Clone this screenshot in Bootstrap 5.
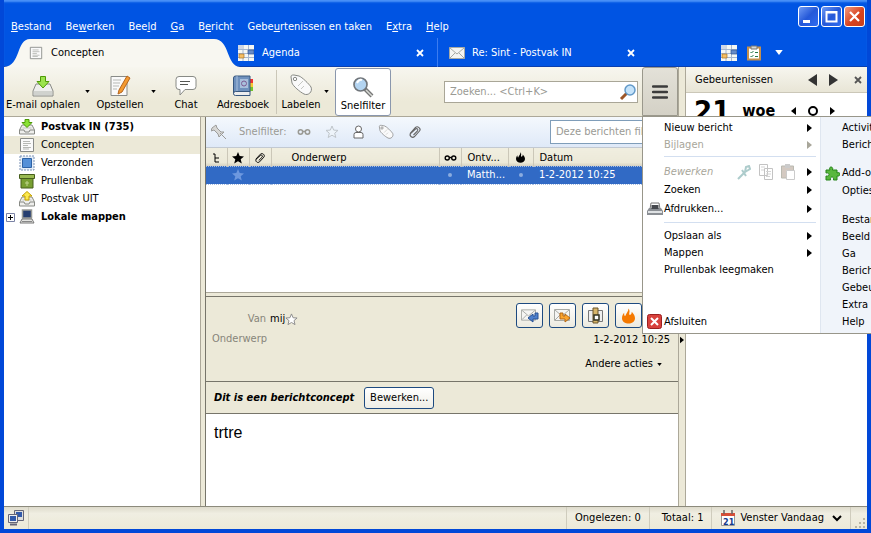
<!DOCTYPE html>
<html lang="nl">
<head>
<meta charset="utf-8">
<meta name="viewport" content="width=device-width, initial-scale=1">
<title>Concepten</title>
<link href="https://cdn.jsdelivr.net/npm/bootstrap@5.3.0/dist/css/bootstrap.min.css" rel="stylesheet">
<style>
:root{--face:#ece9d8;--frame:#0054e3;--line:#aca899}
body{font-family:"DejaVu Sans Condensed","DejaVu Sans",sans-serif;font-size:11px;line-height:16px;color:#000;background:var(--frame);overflow:hidden}
.app{border:solid #0148d8;border-width:0 4px 4px;box-shadow:inset 0 3px 2px -1px #4b93f8;background:var(--frame)}
button,input{font:inherit;color:inherit}
.plain{background:none;border:0;padding:0;border-radius:0;line-height:16px;font-size:11px;color:inherit;text-align:left;white-space:nowrap}
svg{display:block;flex:none}
/* title bar */
.topbar{height:38px;padding:6px 2px 3px 7px}
.menubar{gap:14px}
.menubar a{color:#fff;text-decoration:none}
.winbtns{gap:2px}
.winbtn{width:21px;height:21px;border:1px solid #fff;border-radius:3px;padding:0;background:linear-gradient(135deg,#6f9bf5,#2458d8 50%,#2f6cf0)}
.winbtn.quit{background:linear-gradient(135deg,#f09a80,#d9431e 55%,#c8401c)}
/* tabs */
.tabstrip{height:29px;color:#fff;box-shadow:inset 0 -1px #0a3fae}
.tab-on{width:236px;padding:1px 0 0 25px;color:#000;gap:8px}
.tab-on .shape{position:absolute;left:0;top:0;z-index:0}
.tab-on>*:not(.shape){position:relative}
.tab-off{width:210px;gap:7px;padding:0 13px 0 11px}
.tab-off.first{width:200px;gap:8px;padding-left:0;margin-left:-2px;border-right:1px solid #3c7cf0}
.tabtools{gap:10px;padding-right:84px}
/* toolbar */
.tools{height:50px;background:linear-gradient(#f7f6ef,#ece9d8 70%);border-bottom:1px solid var(--line)}
.tool{height:46px;display:flex;flex-direction:column;align-items:center;justify-content:flex-end;padding-bottom:2px;white-space:nowrap}
.w-mail{width:78px}.w-write{width:48px}.w-chat{width:48px}.w-book{width:58px}.w-tag{width:40px}
.drop{width:10px;height:46px;display:flex;align-items:center;justify-content:center}
.filter-on{width:56px;height:48px;border:1px solid #8a97ad;border-radius:3px;background:#fff;padding-bottom:1px}
.tsep{width:1px;height:44px;background:#cbc7b8}
.find{width:194px;height:22px;border:1px solid #a9a697;background:#fff}
.find input,.msgfilter input{border:0;background:none;outline:0;min-width:0;padding:0 0 0 5px}
::placeholder{color:#9a9a94!important;opacity:1}
.hamb{width:36px;height:49px;border:1px solid #9a988c;border-radius:3px 3px 0 0;background:linear-gradient(#e3e1d8,#d4d1c6)}
/* folders */
.tree{width:197px;flex:none;background:#fff;border-right:1px solid var(--line);padding-top:1px;white-space:nowrap}
.tree li{height:18px;padding-left:2px}
.tree .twist{width:13px}
.tree .sel{background:var(--face)}
.tree svg{flex:none}
.tree .fi{margin-right:6px}
.split-v{width:5px;flex:none;background:var(--face);border-right:1px solid #77756a}
.pane{min-width:0}
/* list */
.quick{height:31px;background:linear-gradient(#f4f8fd,#dfe9f8);border-bottom:1px solid #c2c9d2;color:#9a9a94;padding:0 0 0 5px}
.quick .lab{margin:0 10px 0 12px}
.quick .set{gap:14px}
.msgfilter{width:128px;height:24px;border:1px solid #7f9db9;background:#fff}
.threads{table-layout:fixed;width:100%;border-collapse:collapse}
.threads th{height:18px;font-weight:400;padding:2px 0 0;line-height:15px;background:linear-gradient(#f0eee0,#ece9d8 80%,#d6d2c2)}
.threads th+th{border-left:1px solid #cbc7b8}
.threads td{height:18px;padding:0;background:#316ac5;color:#fff;border:dotted #a7bde0;border-width:1px 0}
.threads svg{margin:auto}
.threads .tx{padding-left:6px;white-space:nowrap}
.listbox{height:176px;background:#fff;border-bottom:1px solid var(--line)}
.split-h{height:4px;background:var(--face);border-bottom:1px solid #77756a}
/* message */
.msghead{height:84px;background:var(--face);padding:2px 8px 0 6px}
.lbl{width:54px;color:#87857a;text-align:right}
.acts{gap:6px;margin-right:28px}
.actbtn{width:27px;height:25px;border:1px solid #1d4a80;border-radius:3px;background:linear-gradient(#fff,#eceadf);padding:0;display:flex;align-items:center;justify-content:center}
.draftbar{height:33px;background:var(--face);border:solid #77756a;border-width:1px 0;padding-left:8px;gap:10px}
.editbtn{height:22px;width:70px;border:1px solid #1d4a80;border-radius:3px;background:linear-gradient(#fff,#efeee6);padding:0;text-align:center}
.msgbody{background:#fff;font:16px/20px "Liberation Sans",Arial,sans-serif;padding:9px 8px}
.split-t{width:8px;flex:none;background:var(--face);border:solid var(--line);border-width:0 1px}
.split-t .above{flex:5}
.split-t .below{flex:3}
/* today */
.today{width:181px;flex:none;background:#fff}
.today-h{height:26px;padding:0 5px 0 9px;background:linear-gradient(#f7f6ef,#e8e5d6);border-bottom:1px solid #cbc7b8}
.today-d{padding:2px 8px}
.daynum{font-size:29px;line-height:32px;font-weight:700}
.dayname{font-size:16px;line-height:20px;font-weight:700}
/* application menu */
.appmenu{position:absolute;left:0;top:49px;z-index:10;width:229px;height:218px;border:1px solid #98968a;border-right:0;background:#fff}
.am-l{width:177px;flex:none;padding:2px 0 3px}
.am-r{min-width:0;overflow:hidden;background:#f0f4fa;border-left:1px solid #dfe6f0;padding:2px 0}
.mi{height:17px;display:grid;grid-template-columns:21px 1fr auto 13px;align-items:center;width:100%}
.mi.h18{height:18px}.mi.h20{height:20px}
.am-r .mi{grid-template-columns:21px 1fr}
.mi.grp{margin-top:11px}
.msep{height:1px;background:#d3dff0;margin:3px 4px 6px 21px}
.off{color:#a8a69a}
/* status */
.status{height:23px;background:linear-gradient(#dedbcc,#f0eee2 30%,#ece9d8);border-top:1px solid #8c8a7c}
.status>*{border-right:1px solid #cfccbd;height:100%;display:flex;align-items:center}
.status .tot{padding:0 8px 0 12px}
</style>
</head>
<body>
<svg width="0" height="0" class="position-absolute" aria-hidden="true">
<defs>
<symbol id="doc" viewBox="0 0 16 16"><path d="M1.5 1.5h13v13h-13z" fill="#fafafa" stroke="#898b88"/><path d="M4 4.500h7M4 6.500h8M4 8.500h5M4 10.500h8M4 12h6" stroke="#b7b9b5"/></symbol>
<symbol id="cal" viewBox="0 0 16 16"><path d="M0 0h16v16H0z" fill="#f5f7f4"/><path d="M0 4.500h16M0 8.500h16M0 12.500h16M5 0v16M10.500 0v16" stroke="#a6b7cf"/><path d="M1 9h5v4H1z" fill="#f6bf65" stroke="#a77427" stroke-width=".7"/><path d="M10 5h6v4h-6z" fill="#668bc8" stroke="#31558d" stroke-width=".7"/><path d="M0 0h4v4H0z" fill="#cfd8e8"/></symbol>
<symbol id="tray" viewBox="0 0 16 16"><path d="M3 6h10l2.500 5v4H.5v-4z" fill="#eeeeec" stroke="#888a85"/><path d="M1 11h4l1 2h4l1-2h4" fill="none" stroke="#888a85"/><path d="M3.500 9h9" stroke="#c5c7c2"/></symbol>
<symbol id="inbox" viewBox="0 0 16 16"><use href="#tray"/><path d="M6 .5h4v3h3L8 8.500 3 3.500h3z" fill="#8ae234" stroke="#4e9a06"/></symbol>
<symbol id="outbox" viewBox="0 0 16 16"><use href="#tray"/><path d="M6 9V5H3l5-4.500L13 5h-3v4z" fill="#fce94f" stroke="#c4a000"/></symbol>
<symbol id="clip" viewBox="0 0 14 14"><path d="M2 8.500L7.500 2.500C9.500.5 13.500 3.500 11.500 6L6.500 11.500C4.500 13.500 1 11 2.500 8.500L7.500 4C9 2.800 10.500 4.500 9.500 6L5.500 10" fill="none" stroke="currentColor" stroke-width="1.100"/></symbol>
<symbol id="star" viewBox="0 0 14 14"><path d="M7 1l1.700 4.100 4.300.3-3.300 2.800 1.100 4.300L7 10.200l-3.800 2.300 1.100-4.300L1 5.400l4.300-.3z"/></symbol>
<symbol id="specs" viewBox="0 0 14 8"><g fill="none" stroke="currentColor" stroke-width="1.500"><circle cx="3.500" cy="4" r="2.200"/><circle cx="10.500" cy="4" r="2.200"/><path d="M5.500 3.500h3"/></g></symbol>
<symbol id="tag" viewBox="0 0 24 24"><path d="M2 4c0-2 1-2 3-2l5 1c3 1 10 8 12 11 2 5-3 9-7 7C11 19 4 13 3 10z" fill="#fafafa" stroke="currentColor"/><circle cx="6" cy="6" r="1.700" fill="none" stroke="currentColor"/><path d="M9 13l5-5M12 16l3-3" stroke="#c5c7c2"/></symbol>
<symbol id="down" viewBox="0 0 6 4"><path d="M0 0h6L3 4z" fill="currentColor"/></symbol>
<symbol id="right" viewBox="0 0 5 8"><path d="M0 0v8l5-4z" fill="currentColor"/></symbol>
<symbol id="env" viewBox="0 0 16 12"><path d="M.5.5h15v11H.5z" fill="#f5f5f3" stroke="#a8aaa5"/><path d="M1 1l7 6 7-6M1 11l5-5M15 11l-5-5" fill="none" stroke="#a8aaa5"/></symbol>
<symbol id="x" viewBox="0 0 8 8"><path d="M1 1l6 6M7 1L1 7" stroke="currentColor" stroke-width="1.800"/></symbol>
<symbol id="flame" viewBox="0 0 12 14"><path d="M6 0c2 3 0 4 1 6 1 0 2-1 2-3 2 2 3 4 3 6 0 3-3 5-6 5s-6-2-6-5c0-2 1-4 2-5 0 2 0 3 1 3C4 4 6 3 6 0z" fill="currentColor"/></symbol>
</defs></svg>

<div class="app vh-100 d-flex flex-column">
<header class="topbar d-flex justify-content-between align-items-end">
 <nav class="menubar d-flex" aria-label="Menubalk">
  <a href="#"><u>B</u>estand</a><a href="#">Be<u>w</u>erken</a><a href="#">Bee<u>l</u>d</a><a href="#"><u>G</u>a</a><a href="#">B<u>e</u>richt</a><a href="#">Gebe<u>u</u>rtenissen en taken</a><a href="#">E<u>x</u>tra</a><a href="#"><u>H</u>elp</a>
 </nav>
 <div class="winbtns d-flex align-self-start">
  <button class="winbtn" aria-label="Minimaliseren"><svg width="19" height="19"><path d="M4 13h7v3H4z" fill="#fff"/></svg></button>
  <button class="winbtn" aria-label="Maximaliseren"><svg width="19" height="19"><path d="M4.500 5h10v9.500h-10zM4 5.500h11" fill="none" stroke="#fff" stroke-width="2"/></svg></button>
  <button class="winbtn quit" aria-label="Sluiten"><svg width="19" height="19"><path d="M5 5l9 9M14 5l-9 9" stroke="#fff" stroke-width="2.200"/></svg></button>
 </div>
</header>

<div class="tabstrip d-flex align-items-stretch">
 <div class="tab-on position-relative d-flex align-items-center">
  <svg class="shape" width="236" height="29"><path d="M0 29C17 28 12 1 26 1H210C226 1 222 28 236 29z" fill="#f8f7f1"/></svg>
  <svg width="14" height="16"><use href="#doc"/></svg><span>Concepten</span>
 </div>
 <div class="tab-off first d-flex align-items-center"><svg width="16" height="16"><use href="#cal"/></svg><span>Agenda</span><button class="plain ms-auto" aria-label="Agenda sluiten"><svg width="8" height="8"><use href="#x"/></svg></button></div>
 <div class="tab-off d-flex align-items-center"><svg width="16" height="12"><use href="#env"/></svg><span>Re: Sint - Postvak IN</span><button class="plain ms-auto" aria-label="Bericht sluiten"><svg width="8" height="8"><use href="#x"/></svg></button></div>
 <div class="tabtools d-flex align-items-center ms-auto">
  <button class="plain" aria-label="Agenda"><svg width="16" height="16"><use href="#cal"/></svg></button>
  <button class="plain" aria-label="Taken"><svg width="14" height="16"><path d="M1 2.500h12v12H1z" fill="#fff" stroke="#c5904d" stroke-width="2"/><path d="M4 1h6v3H4z" fill="#d5d7d2" stroke="#777"/><path d="M3.500 7l1 1 2-2M3.500 11l1 1 2-2M8 7.500h3M8 11.500h3" fill="none" stroke="#27794a"/></svg></button>
  <button class="plain ms-1" aria-label="Alle tabbladen"><svg width="8" height="5"><use href="#down"/></svg></button>
 </div>
</div>

<div class="d-flex flex-grow-1">
 <main class="pane d-flex flex-column flex-grow-1">
  <div class="tools d-flex align-items-center">
   <button class="plain tool w-mail"><svg width="22" height="22" viewBox="0 0 22 22"><path d="M4 9h14l3 7v5H1v-5z" fill="#eeeeec" stroke="#888a85"/><path d="M2 16h18v4H2z" fill="#d0d2ce"/><path d="M8.500 1.500h5v5H17l-6 6.500-6-6.500h3.500z" fill="#9be34d" stroke="#4e9a06"/></svg>E-mail ophalen</button>
   <button class="plain drop" aria-label="Meer ophalen"><svg width="5" height="3"><use href="#down"/></svg></button>
   <button class="plain tool w-write ms-1"><svg width="22" height="22" viewBox="0 0 22 22"><path d="M2 1.500h16v19H2z" fill="#fafafa" stroke="#898b88"/><path d="M4 5h8M4 8h7M4 11h6M4 14h4" stroke="#b7b9b5"/><path d="M18 1l3 2-8 14-4 2 1-4z" fill="#f49a30" stroke="#b5651d"/></svg>Opstellen</button>
   <button class="plain drop ms-1" aria-label="Meer opstellen"><svg width="5" height="3"><use href="#down"/></svg></button>
   <button class="plain tool w-chat ms-1"><svg width="22" height="22" viewBox="0 0 22 22"><path d="M4 1.500h14q3 0 3 3v7q0 3-3 3h-8L5 20v-5.500H4q-3 0-3-3v-7q0-3 3-3z" fill="#fff" stroke="#888a85"/><path d="M5 6.500h10M5 9.500h8" stroke="#555753"/></svg>Chat</button>
   <button class="plain tool w-book ms-1"><svg width="22" height="22" viewBox="0 0 22 22"><path d="M18 4h3v4h-3z" fill="#e33"/><path d="M18 8h3v4h-3z" fill="#f8c630"/><path d="M18 12h3v4h-3z" fill="#73c42d"/><path d="M1.500 3q0-2 2-2H18v16H3.500q-2 0-2 2z" fill="#6f91bd" stroke="#38587f"/><path d="M1.500 18.500q0-2 2-2H18v4H3.500q-2 0-2-2z" fill="#eee" stroke="#38587f"/><path d="M5 1v15" stroke="#a9c0dd"/><path d="M8 4h8v9H8z" fill="#a8bfdc"/><circle cx="12" cy="8.500" r="2.500" fill="none" stroke="#7d5b93"/></svg>Adresboek</button>
   <div class="tsep mx-1"></div>
   <button class="plain tool w-tag"><svg width="24" height="24" color="#888a85"><use href="#tag"/></svg>Labelen</button>
   <button class="plain drop" aria-label="Meer labels"><svg width="5" height="3"><use href="#down"/></svg></button>
   <button class="plain tool filter-on ms-1" aria-pressed="true"><svg width="22" height="22" viewBox="0 0 22 22"><path d="M13 13l7 7" stroke="#777" stroke-width="4"/><path d="M14 14l6 6" stroke="#d8dad5" stroke-width="1.500"/><circle cx="8.500" cy="8.500" r="6.500" fill="#b3d4f1" stroke="#71767b" stroke-width="1.700"/><path d="M5 7q2-4 5-3" stroke="#fff" stroke-width="2" fill="none"/></svg>Snelfilter</button>
   <div class="find d-flex align-items-center ms-auto"><input class="flex-grow-1" type="text" aria-label="Zoeken" placeholder="Zoeken... &lt;Ctrl+K&gt;"><svg width="18" height="18" viewBox="0 0 18 18"><path d="M2 16l6-6" stroke="#9c5527" stroke-width="3"/><circle cx="11" cy="7" r="5" fill="#c5e3fa" stroke="#639ac8" stroke-width="1.500"/></svg></div>
   <div class="position-relative ms-1 align-self-start">
    <button class="plain hamb d-flex align-items-center justify-content-center" aria-label="Toepassingsmenu" aria-expanded="true"><svg width="16" height="14"><path d="M1 1.500h14M1 7h14M1 12.500h14" stroke="#3b3b3b" stroke-width="2.500" stroke-linecap="round"/></svg></button>
    <div class="appmenu d-flex">
     <div class="am-l d-flex flex-column">
      <button class="plain mi"><i></i><span>Nieuw bericht</span><i></i><svg width="5" height="8"><use href="#right"/></svg></button>
      <button class="plain mi off" disabled><i></i><span>Bijlagen</span><i></i><svg width="5" height="8"><use href="#right"/></svg></button>
      <div class="msep"></div>
      <div class="mi h18"><i></i><em class="off">Bewerken</em><span class="d-flex gap-2 me-2 pe-1 opacity-50">
       <button class="plain" disabled aria-label="Knippen"><svg width="14" height="15"><path d="M1 14L9 6M5 5l4 6M8 7l1-5 3-1 1 3-5 3" fill="none" stroke="#5d9a9a" stroke-width="2"/></svg></button>
       <button class="plain" disabled aria-label="Kopiëren"><svg width="14" height="16"><path d="M.5.500h8v11h-8zM5.500 4.500h8v11h-8z" fill="#fff" stroke="#888"/><path d="M2 3h4M2 6h3M7 7.500h5M7 10h5M7 12.500h4" stroke="#aaa"/></svg></button>
       <button class="plain" disabled aria-label="Plakken"><svg width="14" height="16"><path d="M.5 2h12v12H.5z" fill="#a99584" stroke="#776"/><path d="M4 0h5v4H4z" fill="#999"/><path d="M5.500 6.500h8v9h-8z" fill="#fff" stroke="#999"/></svg></button></span><svg width="5" height="8"><use href="#right"/></svg></div>
      <button class="plain mi h18"><i></i><span>Zoeken</span><i></i><svg width="5" height="8"><use href="#right"/></svg></button>
      <button class="plain mi h20"><svg class="ms-1" width="16" height="14"><path d="M4 1h8l1 6H3z" fill="#fff" stroke="#777"/><path d="M2 6h12l2 3v4H0V9z" fill="#8b8f94"/><path d="M4.500 3h7v4h-7z" fill="#45484d"/><path d="M1 9h14v2H1z" fill="#dfe2e4"/></svg><span>Afdrukken...</span><i></i><svg width="5" height="8"><use href="#right"/></svg></button>
      <div class="msep mb-1"></div>
      <button class="plain mi"><i></i><span>Opslaan als</span><i></i><svg width="5" height="8"><use href="#right"/></svg></button>
      <button class="plain mi"><i></i><span>Mappen</span><i></i><svg width="5" height="8"><use href="#right"/></svg></button>
      <button class="plain mi"><i></i><span>Prullenbak leegmaken</span></button>
      <button class="plain mi mt-auto"><svg class="ms-1" width="15" height="15"><rect x=".5" y=".5" width="14" height="14" rx="2" fill="#d8413c" stroke="#9c2020"/><path d="M4 4l7 7M11 4l-7 7" stroke="#fff" stroke-width="2"/></svg><span>Afsluiten</span></button>
     </div>
     <div class="am-r flex-grow-1">
      <button class="plain mi"><i></i><span>Activiteitenbeheer</span></button>
      <button class="plain mi"><i></i><span>Berichtfilters</span></button>
      <button class="plain mi h18 grp"><svg class="ms-1" width="15" height="15" viewBox="0 0 15 15"><path d="M1 4h4C3 0 9 0 7.500 4H12v3c4-2 4 4 0 3v4H8.500c1-4-4-4-3 0H1v-4c4 1 4-4 0-3z" fill="#59b83d" stroke="#27841b"/></svg><span>Add-ons</span></button>
      <button class="plain mi h18"><i></i><span>Opties</span></button>
      <button class="plain mi grp"><i></i><span>Bestand</span></button>
      <button class="plain mi"><i></i><span>Beeld</span></button>
      <button class="plain mi"><i></i><span>Ga</span></button>
      <button class="plain mi"><i></i><span>Bericht</span></button>
      <button class="plain mi"><i></i><span>Gebeurtenissen en taken</span></button>
      <button class="plain mi"><i></i><span>Extra</span></button>
      <button class="plain mi"><i></i><span>Help</span></button>
     </div>
    </div>
   </div>
  </div>

  <div class="d-flex flex-grow-1">
   <ul class="tree list-unstyled m-0">
    <li class="d-flex align-items-center"><span class="twist"></span><svg class="fi" width="16" height="16"><use href="#inbox"/></svg><b>Postvak IN (735)</b></li>
    <li class="sel d-flex align-items-center"><span class="twist"></span><svg class="fi" width="16" height="16"><use href="#doc"/></svg>Concepten</li>
    <li class="d-flex align-items-center"><span class="twist"></span><svg class="fi" width="16" height="16"><rect x="1" y="1" width="14" height="14" fill="#e6eef8" stroke="#7891b4" stroke-dasharray="2 1"/><path d="M3.500 3.500h9v9h-9z" fill="#5490d8" stroke="#2d62a5"/></svg>Verzonden</li>
    <li class="d-flex align-items-center"><span class="twist"></span><svg class="fi" width="16" height="16"><path d="M2 5h12v10H2z" fill="#789f32" stroke="#465e1c"/><path d="M.5 1.500h15v4H.5z" fill="#9aba52" stroke="#465e1c"/><path d="M6 10h4M8 8v5" stroke="#bfd68d"/></svg>Prullenbak</li>
    <li class="d-flex align-items-center"><span class="twist"></span><svg class="fi" width="16" height="16"><use href="#outbox"/></svg>Postvak UIT</li>
    <li class="d-flex align-items-center"><button class="plain twist" aria-label="Uitklappen"><svg width="9" height="9"><path d="M.5.500h8v8h-8z" fill="#fff" stroke="#7b83a5"/><path d="M2 4.500h5M4.500 2v5" stroke="#000"/></svg></button><svg class="fi" width="16" height="16"><path d="M3.500 1h9v8h-9z" fill="#263e70" stroke="#999b96" stroke-width="1.500"/><path d="M3 10h10l2 4H1z" fill="#e5e5e2" stroke="#777"/><path d="M3 12.500h10" stroke="#888"/></svg><b>Lokale mappen</b></li>
   </ul>
   <div class="split-v"></div>
   <section class="pane d-flex flex-column flex-grow-1">
    <div class="listbox">
     <div class="quick d-flex align-items-center">
      <svg width="16" height="16"><path d="M1 4l4-3 1 3 4 4 3 0-5 5-1-3-4-4-3 1zM9 9l6 6" fill="#d7d7d5" stroke="#9b9b99"/></svg>
      <span class="lab">Snelfilter:</span>
      <div class="set d-flex align-items-center">
       <button class="plain" aria-label="Ongelezen"><svg width="14" height="8"><use href="#specs"/></svg></button>
       <button class="plain" aria-label="Met ster"><svg width="14" height="14" fill="#eef4fa" stroke="#bfc5ca"><use href="#star"/></svg></button>
       <button class="plain" aria-label="Contact"><svg width="11" height="14"><circle cx="5.500" cy="4" r="3" fill="#fff" stroke="#666"/><path d="M1 13V9.500q0-2 2-2h5q2 0 2 2V13z" fill="#fff" stroke="#666"/></svg></button>
       <button class="plain" aria-label="Label"><svg width="16" height="16" color="#777"><use href="#tag"/></svg></button>
       <button class="plain" aria-label="Bijlage"><svg width="14" height="14" color="#666"><use href="#clip"/></svg></button>
      </div>
      <div class="msgfilter d-flex align-items-center ms-auto"><input class="w-100" type="text" aria-label="Deze berichten filteren" placeholder="Deze berichten filteren"></div>
     </div>
     <table class="threads">
      <colgroup><col width="21"><col width="22"><col width="22"><col><col width="22"><col width="47"><col width="25"><col width="145"></colgroup>
      <thead><tr><th aria-label="Gesprek"><svg width="8" height="10"><path d="M1 1h2v8h4M3 5h4" fill="none" stroke="#000"/></svg></th><th aria-label="Ster"><svg width="14" height="14"><use href="#star"/></svg></th><th aria-label="Bijlage"><svg width="12" height="12"><use href="#clip"/></svg></th><th class="ps-3"><span class="ps-1">Onderwerp</span></th><th aria-label="Gelezen"><svg width="13" height="8"><use href="#specs"/></svg></th><th class="tx">Ontv...</th><th aria-label="Ongewenst"><svg width="9" height="11"><use href="#flame"/></svg></th><th class="tx">Datum</th></tr></thead>
      <tbody><tr><td></td><td><svg width="14" height="14" fill="#6d98df"><use href="#star"/></svg></td><td></td><td></td><td><svg width="4" height="4"><circle cx="2" cy="2" r="2" fill="#8bacdf"/></svg></td><td class="tx">Matth...</td><td><svg width="4" height="4"><circle cx="2" cy="2" r="2" fill="#8bacdf"/></svg></td><td class="tx">1-2-2012 10:25</td></tr></tbody>
     </table>
    </div>
    <div class="split-h"></div>
    <div class="msghead d-flex justify-content-between">
     <div class="pt-2 mt-1">
      <div class="d-flex align-items-center"><span class="lbl">Van</span><span class="ms-1">mij</span><svg width="13" height="13" fill="#fff" stroke="#888"><use href="#star"/></svg></div>
      <div class="lbl mt-1">Onderwerp</div>
     </div>
     <div class="d-flex flex-column align-items-end pt-1">
      <div class="acts d-flex">
       <button class="actbtn" aria-label="Beantwoorden"><svg width="18" height="16"><use href="#env" width="15" height="12" y="1"/><path d="M7 10l5-4v2h2V5h3v6h-5v3z" fill="#4d7fcc" stroke="#285294"/></svg></button>
       <button class="actbtn" aria-label="Doorsturen"><svg width="18" height="16"><use href="#env" width="16" height="12" y="1"/><path d="M16 10l-5-4v2H9V5H6v6h5v3z" fill="#fba42c" stroke="#b46916"/></svg></button>
       <button class="actbtn" aria-label="Archiveren"><svg width="17" height="17"><path d="M1.500 3.500h14v11h-14z" fill="#eee" stroke="#777"/><path d="M6 1h5v15H6z" fill="#d7b56a" stroke="#6b542b"/><path d="M7 8h5v5H7z" fill="#fff" stroke="#332" stroke-width="1.500"/></svg></button>
       <button class="actbtn" aria-label="Ongewenst"><svg width="13" height="16" color="#f57900"><use href="#flame"/></svg></button>
      </div>
      <span class="mt-1">1-2-2012 10:25</span>
      <button class="plain d-flex align-items-center gap-1 mt-2 me-2">Andere acties <svg width="5" height="3"><use href="#down"/></svg></button>
     </div>
    </div>
    <div class="draftbar d-flex align-items-center"><b><i>Dit is een berichtconcept</i></b><button class="editbtn">Bewerken...</button></div>
    <div class="msgbody flex-grow-1">trtre</div>
   </section>
  </div>
 </main>
 <div class="split-t d-flex flex-column align-items-center"><i class="above"></i><svg width="4" height="8"><use href="#right"/></svg><i class="below"></i></div>
 <aside class="today">
  <div class="today-h d-flex align-items-center"><span>Gebeurtenissen</span>
   <button class="plain ms-auto" aria-label="Vorige"><svg width="9" height="12"><path d="M9 0v12L0 6z" fill="#333"/></svg></button>
   <button class="plain ms-2 ps-1" aria-label="Volgende"><svg width="9" height="12"><path d="M0 0v12l9-6z" fill="#333"/></svg></button>
   <button class="plain ms-3" aria-label="Paneel sluiten"><svg width="8" height="8" color="#555"><use href="#x"/></svg></button></div>
  <div class="today-d d-flex align-items-center"><span class="daynum">21</span><span class="dayname ms-2 ps-1">woe</span>
   <button class="plain ms-3" aria-label="Vorige dag"><svg width="5" height="8"><path d="M5 0v8L0 4z"/></svg></button>
   <button class="plain ms-2 ps-1" aria-label="Vandaag"><svg width="10" height="10"><circle cx="5" cy="5" r="4" fill="none" stroke="#000" stroke-width="2"/></svg></button>
   <button class="plain ms-2 ps-1" aria-label="Volgende dag"><svg width="5" height="8"><use href="#right"/></svg></button></div>
 </aside>
</div>

<footer class="status d-flex">
 <div class="px-1"><svg width="16" height="16"><path d="M6.500.500h9v10h-9z" fill="#ddd" stroke="#667"/><path d="M8 2h6v5H8z" fill="#3159aa"/><path d="M.5 4.500h9v8h-9z" fill="#eee" stroke="#667"/><path d="M2 6h6v5H2z" fill="#3159aa"/><path d="M2 14.500h7" stroke="#667" stroke-width="2"/></svg></div>
 <div class="ms-auto"></div>
 <div class="px-2">Ongelezen: 0</div>
 <div class="tot">Totaal: 1</div>
 <div class="px-2"><button class="plain d-flex align-items-center gap-1"><svg width="16" height="16"><path d="M1.500 3.500h13v12h-13z" fill="#fff" stroke="#999"/><path d="M1 3h14v3H1z" fill="#d64f38"/><path d="M4 0v4M12 0v4" stroke="#666" stroke-width="1.500"/><text x="3" y="15" font-size="9" font-weight="bold" fill="#163a8c">21</text></svg>Venster Vandaag<svg class="ms-1" width="10" height="7"><path d="M1 1l4 4 4-4" fill="none" stroke="#000" stroke-width="2"/></svg></button></div>
 <div class="border-0 align-items-end ps-1"><svg width="12" height="12"><path d="M8 1h2v2H8zM4 5h2v2H4zM8 5h2v2H8zM0 9h2v2H0zM4 9h2v2H4zM8 9h2v2H8z" fill="#b8b5a4"/></svg></div>
</footer>
</div>
<script src="https://cdn.jsdelivr.net/npm/bootstrap@5.3.0/dist/js/bootstrap.bundle.min.js"></script>
</body>
</html>
